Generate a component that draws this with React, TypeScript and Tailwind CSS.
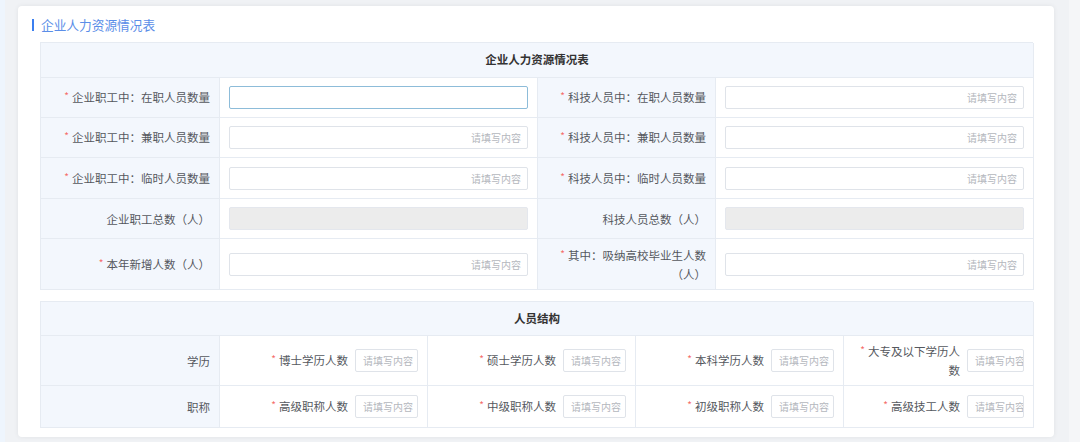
import React from "react";

const FONT = { fontFamily: '"Noto Sans CJK SC", "Noto Sans", sans-serif' };

function Req() {
  return <span className="text-[#f56c6c] text-[10px] mr-[3px] relative top-[-2px]">*</span>;
}

function WideInput({ disabled, focus }: { disabled?: boolean; focus?: boolean }) {
  if (disabled) {
    return <div className="w-full h-[23px] rounded-[2px] border border-[#e4e7ed] bg-[#ececec]" />;
  }
  return (
    <input
      readOnly
      placeholder={focus ? "" : "请填写内容"}
      className={
        "w-full h-[23px] rounded-[2px] border bg-white text-right pr-[6px] text-[10px] outline-none placeholder:text-[#b4b7bd] " +
        (focus ? "border-[#8dbcd9]" : "border-[#dfe3e9]")
      }
      style={FONT}
    />
  );
}

function SmallInput({ last }: { last?: boolean }) {
  return (
    <input
      readOnly
      placeholder="请填写内容"
      className={
        "shrink-0 h-[23px] rounded-[2px] border border-[#dfe3e9] bg-white pl-[7px] pr-0 text-[10px] outline-none placeholder:text-[#b4b7bd] " +
        (last ? "w-[57px]" : "w-[63px]")
      }
      style={FONT}
    />
  );
}

type Row1 = { l: string; lr: boolean; r: string; rr: boolean; dis?: boolean; h: string };

const rows1: Row1[] = [
  { l: "企业职工中：在职人员数量", lr: true, r: "科技人员中：在职人员数量", rr: true, h: "h-[40px]" },
  { l: "企业职工中：兼职人员数量", lr: true, r: "科技人员中：兼职人员数量", rr: true, h: "h-[40px]" },
  { l: "企业职工中：临时人员数量", lr: true, r: "科技人员中：临时人员数量", rr: true, h: "h-[41px]" },
  { l: "企业职工总数（人）", lr: false, r: "科技人员总数（人）", rr: false, dis: true, h: "h-[40px]" },
  { l: "本年新增人数（人）", lr: true, r: "其中：吸纳高校毕业生人数（人）", rr: true, h: "h-[51px]" },
];

const labelCell =
  "flex items-center justify-end text-right px-[9px] bg-[#f3f7fd] border-r border-b border-[#e6ebf2] text-[11.5px] leading-[18px] text-[#55585e]";
const inputCell = "flex items-center px-[9px] border-r border-b border-[#e6ebf2] bg-white";

export default function App() {
  return (
    <div className="w-[1080px] h-[442px] flex bg-[#f0f2f5] overflow-hidden" style={FONT}>
      <div className="w-[5px] h-full bg-[#eef5fd]" />
      <div className="pl-[13px] pt-[6px]">
        <div className="w-[1036px] h-[431px] bg-white rounded-[4px] shadow-[0_0_5px_rgba(0,0,0,0.07)] pl-[22px] pr-[21px]">
          <div className="flex items-center -ml-[8px] pt-[12px] h-[26px] mb-[10px]">
            <div className="w-[2px] h-[12px] bg-[#3b7ff0]" />
            <span className="ml-[7px] text-[12.7px] leading-[14px] text-[#5b8ee8]">企业人力资源情况表</span>
          </div>

          <div className="grid grid-cols-[179px_318px_178px_318px] border-l border-t border-[#e6ebf2]">
            <div className="col-span-4 h-[35px] flex items-center justify-center bg-[#f3f7fd] border-r border-b border-[#e6ebf2] text-[11.5px] font-bold text-[#333]">
              企业人力资源情况表
            </div>
            {rows1.map((r, i) => (
              <React.Fragment key={i}>
                <div className={labelCell + " " + r.h}>
                  <span>
                    {r.lr && <Req />}
                    {r.l}
                  </span>
                </div>
                <div className={inputCell + " " + r.h}>
                  <WideInput disabled={r.dis} focus={i === 0} />
                </div>
                <div className={labelCell + " " + r.h}>
                  <span>
                    {r.rr && <Req />}
                    {r.r}
                  </span>
                </div>
                <div className={inputCell + " " + r.h}>
                  <WideInput disabled={r.dis} />
                </div>
              </React.Fragment>
            ))}
          </div>

          <div className="mt-[11px] grid grid-cols-[179px_208px_208px_208px_190px] border-l border-t border-[#e6ebf2]">
            <div className="col-span-5 h-[34px] flex items-center justify-center bg-[#f3f7fd] border-r border-b border-[#e6ebf2] text-[11.5px] font-bold text-[#333]">
              人员结构
            </div>
            {[
              { t: "学历", items: ["博士学历人数", "硕士学历人数", "本科学历人数", "大专及以下学历人数"], h: "h-[50px]" },
              { t: "职称", items: ["高级职称人数", "中级职称人数", "初级职称人数", "高级技工人数"], h: "h-[42px]" },
            ].map((row, i) => (
              <React.Fragment key={i}>
                <div className={labelCell + " " + row.h}>{row.t}</div>
                {row.items.map((it, j) => (
                  <div
                    key={j}
                    className={
                      "flex items-center justify-end gap-[7px] px-[9px] border-r border-b border-[#e6ebf2] bg-white " + row.h
                    }
                  >
                    <span
                      className={
                        "text-right text-[11.5px] leading-[18px] text-[#55585e] " + (j === 3 ? "max-w-[107px]" : "")
                      }
                    >
                      <Req />
                      {it}
                    </span>
                    <SmallInput last={j === 3} />
                  </div>
                ))}
              </React.Fragment>
            ))}
          </div>
        </div>
      </div>
      <div className="ml-[15px] w-[11px] h-full bg-[#f5f6f8]" />
    </div>
  );
}
